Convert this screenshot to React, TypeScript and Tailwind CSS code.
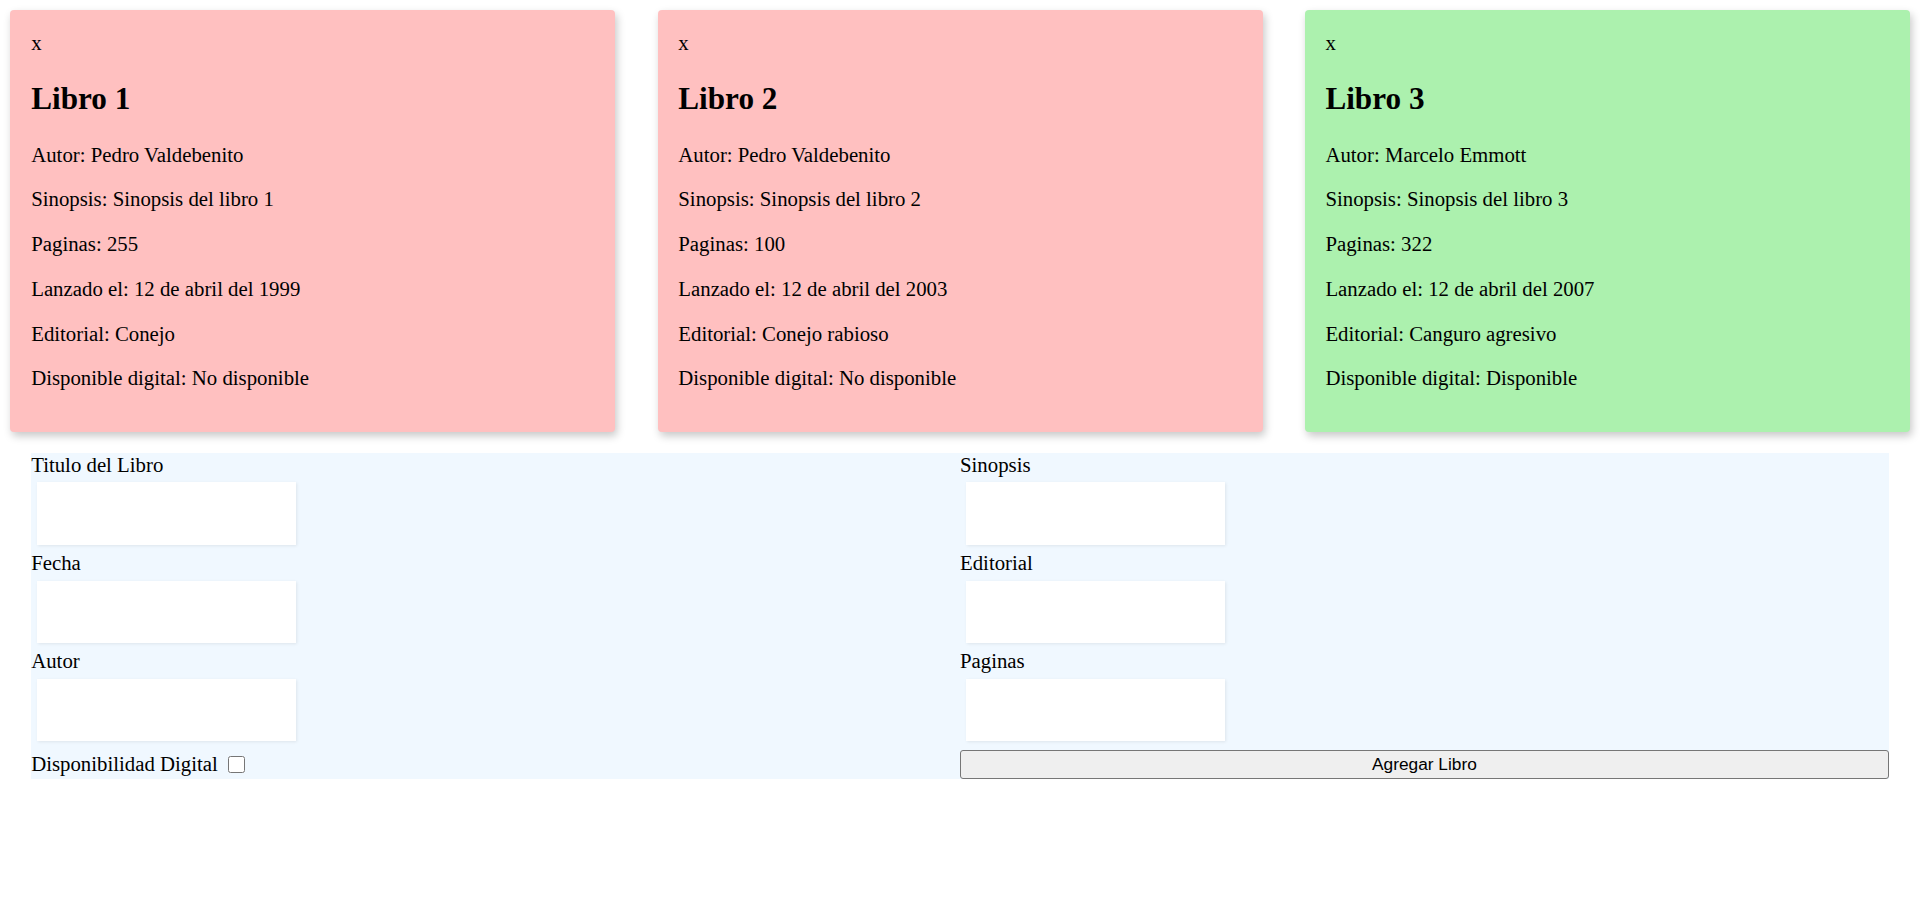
import React from "react";

type Book = {
  title: string;
  autor: string;
  sinopsis: string;
  paginas: number;
  fecha: string;
  editorial: string;
  digital: boolean;
};

const books: Book[] = [
  { title: "Libro 1", autor: "Pedro Valdebenito", sinopsis: "Sinopsis del libro 1", paginas: 255, fecha: "12 de abril del 1999", editorial: "Conejo", digital: false },
  { title: "Libro 2", autor: "Pedro Valdebenito", sinopsis: "Sinopsis del libro 2", paginas: 100, fecha: "12 de abril del 2003", editorial: "Conejo rabioso", digital: false },
  { title: "Libro 3", autor: "Marcelo Emmott", sinopsis: "Sinopsis del libro 3", paginas: 322, fecha: "12 de abril del 2007", editorial: "Canguro agresivo", digital: true },
];

function Card({ b }: { b: Book }) {
  return (
    <div
      className={`w-[605px] rounded-[4px] p-[20.8px] shadow-[2px_4px_8px_rgba(0,0,0,0.22)] ${
        b.digital ? "bg-[#acf1ae]" : "bg-[#ffc0c0]"
      }`}
    >
      <div className="leading-[1.15]">x</div>
      <h2 className="my-[25.9px] text-[31.2px] font-bold leading-[1.15]">{b.title}</h2>
      <p className="my-[20.8px] leading-[1.15]">Autor: {b.autor}</p>
      <p className="my-[20.8px] leading-[1.15]">Sinopsis: {b.sinopsis}</p>
      <p className="my-[20.8px] leading-[1.15]">Paginas: {b.paginas}</p>
      <p className="my-[20.8px] leading-[1.15]">Lanzado el: {b.fecha}</p>
      <p className="my-[20.8px] leading-[1.15]">Editorial: {b.editorial}</p>
      <p className="my-[20.8px] leading-[1.15]">
        Disponible digital: {b.digital ? "Disponible" : "No disponible"}
      </p>
    </div>
  );
}

function Field({ label }: { label: string }) {
  return (
    <div>
      <label className="block leading-[1.15]">{label}</label>
      <input
        type="text"
        className="block mx-[6px] my-[6px] h-[62.4px] w-[259px] bg-white border-0 outline-none shadow-[1px_1px_3px_rgba(0,0,0,0.08)]"
      />
    </div>
  );
}

export default function App() {
  return (
    <div
      className="min-h-[918px] bg-white text-black text-[20.8px] p-[10.4px]"
      style={{ fontFamily: '"Liberation Serif", "Times New Roman", serif' }}
    >
      <div className="flex justify-between">
        {books.map((b) => (
          <Card key={b.title} b={b} />
        ))}
      </div>
      <form className="mx-[20.8px] mt-[20.8px] grid grid-cols-2 bg-[#f0f8ff]">
        <Field label="Titulo del Libro" />
        <Field label="Sinopsis" />
        <Field label="Fecha" />
        <Field label="Editorial" />
        <Field label="Autor" />
        <Field label="Paginas" />
        <div className="flex h-[31.3px] items-center pt-[2px] leading-[1.15]">
          <span>Disponibilidad Digital</span>
          <input type="checkbox" className="ml-[10.4px] h-[17px] w-[17px]" />
        </div>
        <div className="h-[31.3px] pt-[3px]">
          <button
            type="button"
            className="block h-[28.3px] w-full rounded-[3px] border border-solid border-[#767676] bg-[#efefef] text-[17.3px] leading-none text-black"
            style={{ fontFamily: '"Liberation Sans", Arial, sans-serif' }}
          >
            Agregar Libro
          </button>
        </div>
      </form>
    </div>
  );
}
